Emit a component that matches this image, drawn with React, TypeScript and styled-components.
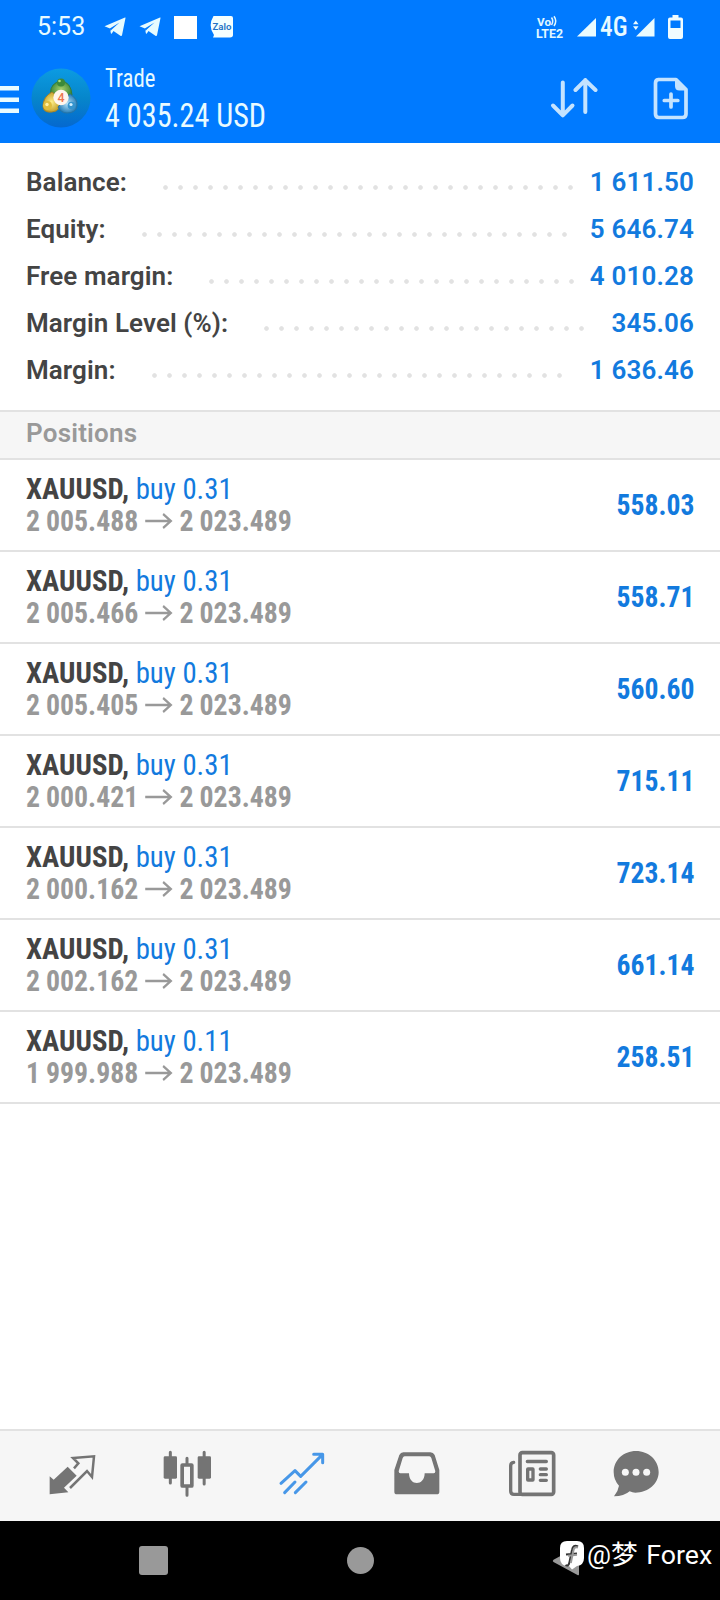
import React from "react";
import styled, { createGlobalStyle } from "styled-components";

const GlobalStyle = createGlobalStyle`
  * { box-sizing: border-box; }
  body { margin: 0; background: #fff; font-family: Roboto, "Noto Sans CJK SC", sans-serif; }
  svg { display: block; flex: none; }
`;

const Screen = styled.div`
  width: 720px;
  height: 1600px;
  display: flex;
  flex-direction: column;
  overflow: hidden;
  background: #fff;
`;

const Header = styled.header`
  height: 143px;
  flex: none;
  background: #007aff;
  color: #e8faff;
`;

const StatusBar = styled.div`
  height: 54px;
  display: flex;
  align-items: center;
  padding: 0 37px;
`;

const Clock = styled.span`
  width: 67px;
  font-size: 25px;
  line-height: 56px;
`;

const StatusGroup = styled.div<{ $gap: number }>`
  display: flex;
  align-items: center;
  gap: ${(p) => p.$gap}px;
`;

const Spacer = styled.div`
  flex: 1;
`;

const NetworkLabel = styled.span`
  display: block;
  width: 28px;
  font-family: "Roboto Condensed", Roboto, sans-serif;
  font-stretch: condensed;
  font-size: 27.5px;
  font-weight: 500;
  line-height: 54px;
  transform: scaleX(0.92);
  transform-origin: left;
`;

const AppBar = styled.div`
  height: 89px;
  display: flex;
  align-items: flex-start;
`;

const IconSlot = styled.div<{ $top?: number; $left: number }>`
  flex: none;
  padding: ${(p) => p.$top ?? 0}px 0 0 ${(p) => p.$left}px;
`;

const TitleBlock = styled.div`
  width: 400px;
  flex: none;
  padding: 9px 0 0 14px;
  font-family: "Roboto Condensed", Roboto, sans-serif;
  font-stretch: condensed;
`;

const Title = styled.div`
  font-size: 25px;
  font-weight: 450;
  line-height: 31px;
  transform: scaleX(0.91);
  transform-origin: left;
`;

const Total = styled.div`
  margin-top: 2px;
  font-size: 33px;
  line-height: 40px;
  transform: scaleX(0.915);
  transform-origin: left;
`;

const Summary = styled.section`
  height: 267px;
  flex: none;
  padding: 15px 26px 0;
`;

const SummaryRow = styled.div`
  height: 47px;
  display: flex;
  align-items: center;
  font-size: 26px;
  font-weight: 600;
  letter-spacing: 0.08px;
`;

const SummaryLabel = styled.span`
  color: #444;
`;

const Leader = styled.span<{ $dots: number }>`
  width: ${(p) => p.$dots * 15}px;
  height: 15px;
  margin: 12px 0 0 31px;
  background: radial-gradient(circle at 7.5px 7.5px, #e2e2e2 1.9px, transparent 2.7px) 0 0 / 15px 15px;
`;

const SummaryValue = styled.span`
  margin-left: auto;
  color: #127ade;
  letter-spacing: 0.15px;
`;

const SectionHeader = styled.h2`
  height: 50px;
  flex: none;
  margin: 0;
  padding: 0 26px;
  border: solid #e2e2e2;
  border-width: 2px 0;
  background: #f6f6f6;
  color: #999;
  font-size: 26px;
  font-weight: 600;
  letter-spacing: 0.2px;
  line-height: 43px;
`;

const Position = styled.article`
  height: 92px;
  flex: none;
  display: flex;
  align-items: center;
  justify-content: space-between;
  padding: 0 26px;
  border-bottom: 2px solid #e2e2e2;
  font-family: "Roboto Condensed", Roboto, sans-serif;
  font-stretch: condensed;
  font-size: 30.3px;
  font-weight: 700;
  line-height: 32px;
`;

const Symbol = styled.div`
  color: #444;
  transform: scaleX(0.95);
  transform-origin: left;
`;

const Order = styled.span`
  color: #127ade;
  font-weight: 400;
`;

const Prices = styled.div`
  display: flex;
  align-items: center;
  color: #999;
  transform: scaleX(0.917);
  transform-origin: left;
`;

const Price = styled.span`
  word-spacing: -0.5px;
`;

const Profit = styled.div`
  color: #127ade;
  transform: scaleX(0.912);
  transform-origin: right;
`;

const TabBar = styled.nav`
  height: 92px;
  flex: none;
  margin-top: auto;
  display: flex;
  padding-left: 14.6px;
  border-top: 2px solid #e2e2e2;
  background: #f6f6f6;
`;

const Tab = styled.div<{ $width?: number }>`
  width: ${(p) => p.$width ?? 115}px;
  padding-top: 17.4px;
  display: flex;
  justify-content: center;
`;

const SystemNav = styled.footer`
  position: relative;
  height: 79px;
  flex: none;
  display: flex;
  align-items: center;
  background: #000;
`;

const RecentsKey = styled.div`
  width: 29px;
  height: 29px;
  margin-left: 139px;
  border-radius: 3px;
  background: #999;
`;

const HomeKey = styled.div`
  width: 27px;
  height: 27px;
  margin: 0 178px 0 179px;
  border-radius: 50%;
  background: #999;
`;

const Watermark = styled.div`
  position: absolute;
  left: 560px;
  top: 16px;
  display: flex;
  align-items: center;
  gap: 3px;
  color: #fff;
  font-size: 26.7px;
  line-height: 36px;
  word-spacing: 2px;
  white-space: nowrap;
`;

const Plane = () => (
  <svg width="22" height="20" viewBox="0 0 22 20">
    <path d="M0.500 9.300 21 .5q.7-.2.5.6L18 18.300q-.4 1.300-1.600.5L9.500 14l-1.700 2.500q-.8.8-1-.5L6 11.600z" fill="#e6fbff" />
    <path d="M7.500 12.700 15.500 5.500 5.800 11.600 6.600 14z" fill="#007aff" />
  </svg>
);

const StatusIcons = () => (
  <StatusGroup $gap={13}>
    <Plane />
    <Plane />
    <svg width="23" height="23"><rect width="23" height="23" fill="#fff" /></svg>
    <svg width="24" height="24" viewBox="0 0 24 24">
      <path d="M3.500 1H21q2 0 2 2v17q0 2-3 2.500H3l1-2.500Q-2.500 11 3.500 1" fill="#f5ffff" />
      <text x="2.500" y="14.500" textLength="19" lengthAdjust="spacingAndGlyphs" fontSize="9.500" fontWeight="600" fill="#2673c4">Zalo</text>
    </svg>
  </StatusGroup>
);

const VoLte = () => (
  <svg width="28" height="24" viewBox="0 0 28 24" fill="#e2f8ff" fontWeight="700">
    <text x="1" y="10.500" fontSize="11.500" textLength="14" lengthAdjust="spacingAndGlyphs">Vo</text>
    <path d="M15.500 2.500q2.500 3.500 0 7.500M18 1.200q3.500 4.800 0 9.800" fill="none" stroke="#e2f8ff" strokeWidth="1.500" />
    <text x="0" y="22.500" fontSize="13" textLength="27" lengthAdjust="spacingAndGlyphs">LTE2</text>
  </svg>
);

const SignalFull = () => (
  <svg width="19" height="19" viewBox="0 0 19 19"><path d="M19 0V18.500H0z" fill="#e9fbff" /></svg>
);

const SignalData = () => (
  <svg width="22" height="19" viewBox="0 0 22 19" fill="#e9fbff">
    <path d="M21.500 0V18.500H3zM0 6.200 2.800 2.500 5.500 6.200zM0 8.200H5.500L2.800 12z" />
  </svg>
);

const Battery = () => (
  <svg width="15" height="25" viewBox="0 0 15 25">
    <path fillRule="evenodd" d="M4.500 0h6v2.500H13q2 0 2 2V22q0 2-2 2H2q-2 0-2-2V4.500q0-2 2-2h2.500zM2.500 5.500V13h10V5.500z" fill="#f0fcff" />
  </svg>
);

const MenuIcon = () => (
  <svg width="19" height="28" viewBox="0 0 19 28" fill="#e9fbff">
    <path d="M0 0H19V4.500H0zM0 11.500H19V16H0zM0 22.500H19V27H0z" />
  </svg>
);

const Avatar = () => (
  <svg width="60" height="60" viewBox="0 0 60 60">
    <defs>
      <linearGradient id="sky" x1="0" y1="0" x2="0" y2="1">
        <stop offset="0" stopColor="#0c9be2" /><stop offset=".5" stopColor="#0686cb" /><stop offset="1" stopColor="#0568cf" />
      </linearGradient>
      <radialGradient id="green"><stop offset="0" stopColor="#a5d06d" /><stop offset="1" stopColor="#418a39" /></radialGradient>
      <radialGradient id="gold"><stop offset="0" stopColor="#fff08a" /><stop offset="1" stopColor="#c4a12b" /></radialGradient>
      <radialGradient id="blue"><stop offset="0" stopColor="#b8e4fa" /><stop offset="1" stopColor="#287fb9" /></radialGradient>
    </defs>
    <circle cx="30" cy="30" r="29.500" fill="url(#sky)" />
    <path d="M19.500 25q0-10 10.500-12 10 1 11 14l-11 2z" fill="url(#green)" stroke="#347b3a" />
    <path d="M21 24q-9 5-9 14 0 7 9 6 5 0 8-5l-3-11z" fill="url(#gold)" stroke="#a58229" />
    <path d="M39 26q8 5 7 12-1 7-10 7-6 0-9-6z" fill="url(#blue)" stroke="#2874a5" />
    <circle cx="30" cy="14.500" r="4" fill="#3c8a3a" /><circle cx="28.500" cy="13" r="1.300" fill="#ade081" />
    <circle cx="16.500" cy="37.500" r="4.500" fill="#e0bd3c" /><circle cx="16" cy="36.500" r="1.700" fill="#fff0a2" />
    <circle cx="40.500" cy="37.500" r="3.800" fill="#3594ce" /><circle cx="40" cy="36.500" r="1.600" fill="#d3f0ff" />
    <circle cx="30" cy="29.500" r="7.700" fill="#fff6ed" />
    <text x="30" y="34" fontSize="12.500" textAnchor="middle" fontWeight="500" fill="#ed7650">4</text>
  </svg>
);

const SortIcon = () => (
  <svg width="48" height="42" viewBox="0 0 48 42" fill="none" stroke="#c4e3ff" strokeWidth="4" strokeLinecap="round" strokeLinejoin="round">
    <path d="M12.800 5.500V37.500M3 28.500l9.800 9.800L22.500 28.500" />
    <path d="M35.300 35V3M25.500 13l9.800-9.800L45.500 13" />
  </svg>
);

const NewOrderIcon = () => (
  <svg width="36" height="44" viewBox="0 0 36 44">
    <path d="M5 2.500H23L33 12.500V37q0 3.500-3.500 3.500H6q-3.500 0-3.500-3.500V6q0-3.500 3.500-3.500z" fill="none" stroke="#c4e3ff" strokeWidth="3.700" strokeLinejoin="round" />
    <path d="M22 2V9q0 4.500 4.500 4.500H34L24 2z" fill="#c4e3ff" />
    <path d="M18 17V30M11.300 23.500H24.800" stroke="#c4e3ff" strokeWidth="3.700" strokeLinecap="round" />
  </svg>
);

const QuotesIcon = () => (
  <svg width="50" height="50" viewBox="142 85 150 150">
    <path d="M150 170 162 180 204 141 231 168 193 204 206 218 150 224z" fill="#747474" />
    <path d="M211 205 262 154 277 172 283 110 220 115 236 131 223 146" fill="none" stroke="#747474" strokeWidth="7.500" />
  </svg>
);

const ChartsIcon = () => (
  <svg width="50" height="50" viewBox="487 85 150 150">
    <g stroke="#747474" strokeLinecap="round" strokeWidth="9">
      <path d="M512 98V190M613.500 98V193M562 116V137M562 200V227" />
    </g>
    <rect x="492" y="110" width="40" height="67" rx="4" fill="#747474" />
    <rect x="594" y="110" width="40" height="67" rx="4" fill="#747474" />
    <rect x="547.500" y="136" width="29" height="63" rx="1" fill="#f6f6f6" stroke="#747474" strokeWidth="11" />
  </svg>
);

const TradeIcon = () => (
  <svg width="50" height="50" viewBox="832 85 150 150" fill="none" stroke="#4797e8" strokeWidth="9" strokeLinecap="round" strokeLinejoin="round">
    <path d="M844 191 886 153 903 170 966 107M942 104H969V129M886 187 855 219M919 187 887 219" />
  </svg>
);

const HistoryIcon = () => (
  <svg width="50" height="50" viewBox="98 85 150 150">
    <path fillRule="evenodd" d="M132 98H213Q222 98 226 106L240 151V216Q240 224 232 224H113Q105 224 105 216V151L120 106Q124 98 132 98zM136 110Q132 110 130 115L118 155Q118 161 123 161H149C149 200 196 200 196 161H223Q228 161 228 155L216 115Q214 110 210 110z" fill="#747474" />
  </svg>
);

const NewsIcon = () => (
  <svg width="50" height="50" viewBox="444 85 150 150" fill="none" stroke="#747474" strokeWidth="11">
    <rect x="483" y="99" width="101" height="125" rx="7" />
    <path d="M464 128Q455 129 455 138V214Q455 224 465 224H486" strokeLinecap="round" strokeWidth="10" />
    <path d="M505 125.500H562M544 148H562M544 165H562M544 182H562" strokeLinecap="round" strokeWidth="10" />
    <rect x="506" y="148" width="16" height="33" rx="1" strokeWidth="10" />
  </svg>
);

const MessagesIcon = () => (
  <svg width="50" height="50" viewBox="753 85 150 150">
    <path d="M828 94C866 94 896 122 896 157S864 219 826 219Q817 219 809 215 792 230 762 230 774 216 777 198 761 181 761 157C761 122 790 94 828 94z" fill="#747474" />
    <g fill="#f6f6f6"><circle cx="796" cy="158" r="10.500" /><circle cx="828" cy="158" r="10.500" /><circle cx="860" cy="158" r="10.500" /></g>
  </svg>
);

const PriceArrow = () => (
  <svg width="45" height="24" viewBox="0 0 45 24" fill="none" stroke="#999" strokeWidth="2.300">
    <path d="M8 12H36M27.500 5 36 12 27.500 19" />
  </svg>
);

const BackKey = () => (
  <svg width="28" height="32" viewBox="0 0 28 32"><path d="M1.500 14.800 26 1.500Q27 1 27 3V29Q27 31 25.500 30L1.500 17Q0 16 1.500 14.800z" fill="#999" /></svg>
);

const BubbleLogo = () => (
  <svg width="24" height="29" viewBox="0 0 24 29">
    <path d="M7 0H17Q24 0 24 7V17Q24 24 17 25L12 28.500 9 25H7Q0 24 0 17V7Q0 0 7 0z" fill="#fff" />
    <path d="M18 5.500Q13 3 12 9L9.500 21Q8.500 26 5.500 24M6 13.500 17 12.500" fill="none" stroke="#333" strokeWidth="2" />
    <path d="M18 6.500Q14 5 13.300 10L10.800 22M8 14.700 17 13.800" fill="none" stroke="#999" strokeWidth="2" />
  </svg>
);

const summary = [
  { label: "Balance:", value: "1 611.50", dots: 28 },
  { label: "Equity:", value: "5 646.74", dots: 29 },
  { label: "Free margin:", value: "4 010.28", dots: 25 },
  { label: "Margin Level (%):", value: "345.06", dots: 22 },
  { label: "Margin:", value: "1 636.46", dots: 28 },
];

const positions = [
  { volume: "0.31", open: "2 005.488", profit: "558.03" },
  { volume: "0.31", open: "2 005.466", profit: "558.71" },
  { volume: "0.31", open: "2 005.405", profit: "560.60" },
  { volume: "0.31", open: "2 000.421", profit: "715.11" },
  { volume: "0.31", open: "2 000.162", profit: "723.14" },
  { volume: "0.31", open: "2 002.162", profit: "661.14" },
  { volume: "0.11", open: "1 999.988", profit: "258.51" },
];

export default function App() {
  return (
    <Screen>
      <GlobalStyle />
      <Header>
        <StatusBar>
          <Clock>5:53</Clock>
          <StatusIcons />
          <Spacer />
          <StatusGroup $gap={0}>
            <VoLte />
            <IconSlot $left={13}><SignalFull /></IconSlot>
            <IconSlot $left={4}><NetworkLabel>4G</NetworkLabel></IconSlot>
            <IconSlot $left={5}><SignalData /></IconSlot>
            <IconSlot $left={13}><Battery /></IconSlot>
          </StatusGroup>
        </StatusBar>
        <AppBar>
          <IconSlot $top={32} $left={0}><MenuIcon /></IconSlot>
          <IconSlot $top={14} $left={12}><Avatar /></IconSlot>
          <TitleBlock>
            <Title>Trade</Title>
            <Total>4 035.24 USD</Total>
          </TitleBlock>
          <IconSlot $top={23} $left={59}><SortIcon /></IconSlot>
          <IconSlot $top={23} $left={55}><NewOrderIcon /></IconSlot>
        </AppBar>
      </Header>
      <Summary>
        {summary.map((s) => (
          <SummaryRow key={s.label}>
            <SummaryLabel>{s.label}</SummaryLabel>
            <Leader $dots={s.dots} />
            <SummaryValue>{s.value}</SummaryValue>
          </SummaryRow>
        ))}
      </Summary>
      <SectionHeader>Positions</SectionHeader>
      {positions.map((p) => (
        <Position key={p.open}>
          <div>
            <Symbol>XAUUSD, <Order>buy {p.volume}</Order></Symbol>
            <Prices>
              <Price>{p.open}</Price>
              <PriceArrow />
              <Price>2 023.489</Price>
            </Prices>
          </div>
          <Profit>{p.profit}</Profit>
        </Position>
      ))}
      <TabBar>
        <Tab><QuotesIcon /></Tab>
        <Tab><ChartsIcon /></Tab>
        <Tab><TradeIcon /></Tab>
        <Tab><HistoryIcon /></Tab>
        <Tab><NewsIcon /></Tab>
        <Tab $width={92}><MessagesIcon /></Tab>
      </TabBar>
      <SystemNav>
        <RecentsKey />
        <HomeKey />
        <BackKey />
        <Watermark><BubbleLogo />@梦 Forex</Watermark>
      </SystemNav>
    </Screen>
  );
}
